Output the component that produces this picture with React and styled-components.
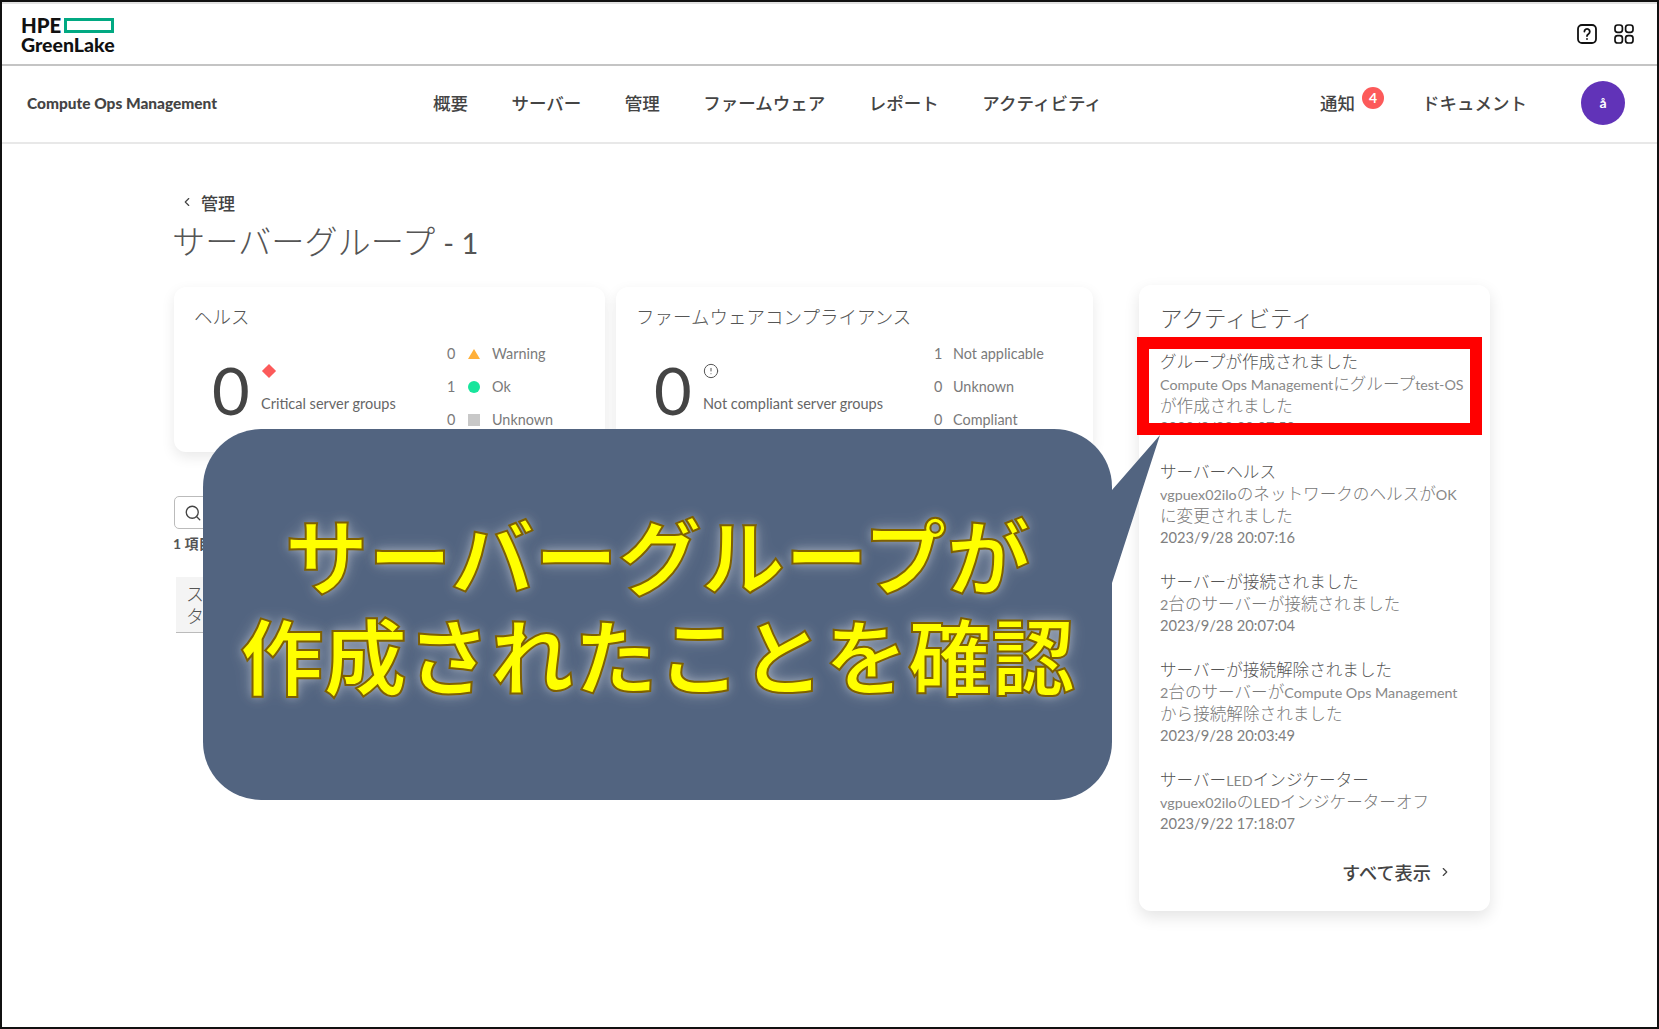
import React from 'react';
import styled, { createGlobalStyle } from 'styled-components';
import { Search, ChevronLeft, ChevronRight, CircleAlert } from 'lucide-react';

const CJK = '"Noto Sans CJK JP"';
const Global = createGlobalStyle`
  html, body { margin: 0; padding: 0; background: #fff; }
  body { font-family: Lato, ${CJK}, sans-serif; color: #444; }
  * { box-sizing: border-box; }
`;

const Frame = styled.div`
  position: relative; width: 1659px; height: 1029px; border: 2px solid #111; overflow: hidden; background: #fff;
`;
const TopBar = styled.header`
  height: 64px; border-top: 2px solid #e2e2e2; border-bottom: 2px solid #c4c4c4;
  display: flex; align-items: flex-start; justify-content: space-between; padding: 13px 23px 0 19px;
`;
const Logo = styled.div`
  display: flex; flex-direction: column; color: #111; font-weight: 900; width: 94px;
`;
const LogoTop = styled.div` display: flex; align-items: center; gap: 3px; height: 16px; font-size: 20.4px; line-height: 16px; `;
const LogoBar = styled.span` width: 50px; height: 15px; border: 3px solid #01a982; `;
const LogoBottom = styled.div` font-size: 19.5px; line-height: 20px; margin-top: 2px; white-space: nowrap; `;
const TopIcons = styled.div` display: flex; gap: 17px; margin-top: 7px; `;

const NavBar = styled.nav`
  height: 78px; border-bottom: 2px solid #e8e8e8; display: flex; align-items: center; padding: 0 0 2px 25px;
  font-family: ${CJK}, sans-serif; color: #444;
`;
const Product = styled.div` width: 406px; font-family: Lato, sans-serif; font-weight: 900; font-size: 15.45px; color: #444; white-space: nowrap; `;
const NavLinks = styled.div` display: flex; gap: 43.5px; width: 887px; `;
const NavLink = styled.a` position: relative; font-size: 17.5px; font-weight: 500; line-height: 24px; white-space: nowrap; margin-left: ${p => p.$offset || 0}px; `;
const Badge = styled.span`
  position: absolute; right: -29px; top: -4px; width: 22px; height: 22px; border-radius: 50%; background: #fc5a5a; color: #fff;
  font: 700 14px/22px Lato, sans-serif; text-align: center;
`;
const Avatar = styled.div`
  width: 44px; height: 44px; border-radius: 50%; background: #6133b8; color: #fff; font: 700 14px/44px Lato, sans-serif; text-align: center; margin-left: 54px;
`;

const Content = styled.main` padding: 46px 0 0 172px; `;
const Crumb = styled.div`
  display: flex; align-items: center; height: 24px; padding-left: 6px; gap: 7px; font-family: ${CJK}, sans-serif; font-size: 17px; font-weight: 500; color: #444;
`;
const PageTitle = styled.h1`
  margin: 4px 0 0 -2px; height: 44px; font: 300 33.2px/44px ${CJK}, sans-serif; color: #555; display: flex; align-items: baseline;
`;
const PageCount = styled.span` font: 400 29px/44px Lato, sans-serif; margin-left: 8px; `;

const Columns = styled.div` display: flex; gap: 46px; margin-top: 23px; align-items: flex-start; `;
const LeftColumn = styled.section` width: 919px; margin-top: 2px; `;
const Cards = styled.div` display: flex; gap: 11px; `;
const Card = styled.article`
  width: ${p => p.$w}px; height: 165px; border-radius: 12px; background: #fff; padding: 18px 0 0 20px;
  box-shadow: 0 5px 14px rgba(0,0,0,.09); overflow: hidden;
`;
const CardTitle = styled.h2` margin: 0; font: 300 18.5px/22px ${CJK}, sans-serif; color: #555; white-space: nowrap; `;
const CardBody = styled.div` display: flex; margin-top: 10px; padding-left: 18px; `;
const Kpi = styled.div` display: flex; width: ${p => p.$w}px; padding-top: 21px; `;
const BigNumber = styled.div` width: 49px; font: 400 65px/64px Lato, sans-serif; color: #444; `;
const KpiSide = styled.div` display: flex; flex-direction: column; align-items: flex-start; gap: 15px; padding-top: 5px; `;
const Diamond = styled.span` width: 10px; height: 10px; margin: 3px 0 3px 3px; background: #fc5a5a; transform: rotate(45deg); `;
const KpiLabel = styled.div` font-size: 14.5px; line-height: 20px; color: #666; white-space: nowrap; `;
const Legend = styled.div` display: flex; flex-direction: column; `;
const LegendRow = styled.div` display: flex; align-items: center; gap: ${p => p.$gap}px; height: 33px; font-size: 14.4px; color: #7a7a7a; white-space: nowrap; `;
const Count = styled.span` width: 9px; `;

const SearchBox = styled.div`
  width: 300px; height: 33px; margin-top: 44px; border: 1px solid #bbb; border-radius: 5px; display: flex; align-items: center; padding-left: 9px; color: #444;
`;
const ItemCount = styled.div` margin: 4px 0 0 -1px; font: 700 14px/22px Lato, ${CJK}, sans-serif; color: #555; `;
const TableHead = styled.div`
  margin: 22px 0 0 2px; height: 56px; background: #f4f4f4; border-bottom: 1px solid #bbb; padding: 5px 0 0 10px; width: 917px;
`;
const HeadCell = styled.div` width: 60px; font: 300 18px/22px ${CJK}, sans-serif; color: #555; `;

const ActivityCard = styled.aside`
  width: 351px; height: 626px; border-radius: 12px; background: #fff; padding: 21px 0 0 21px; box-shadow: 0 6px 16px rgba(0,0,0,.11);
`;
const ActivityTitle = styled.h2` margin: 0 0 22px; font: 300 22.5px/22px ${CJK}, sans-serif; color: #555; `;
const Feed = styled.div` display: flex; flex-direction: column; gap: 22px; `;
const FeedItem = styled.div` display: flex; flex-direction: column; white-space: nowrap; `;
const FeedTitle = styled.div` height: 22px; font: 300 16.6px/22px ${CJK}, sans-serif; color: #555; `;
const FeedText = styled.div` height: 22px; font: 300 16.6px/22px ${CJK}, sans-serif; color: #777; `;
const FeedDate = styled.div` height: 22px; font: 400 14.7px/22px Lato, sans-serif; color: #808080; `;
const Latin = styled.span` font-family: Lato, sans-serif; font-weight: 400; font-size: 14.3px; line-height: 1; color: #888; `;
const ViewAll = styled.div`
  display: flex; align-items: center; justify-content: flex-end; gap: 7px; margin-top: 27px; padding-right: 38px; height: 22px;
  font: 500 18.2px/22px ${CJK}, sans-serif; color: #444;
`;

const RedFrame = styled.div` position: absolute; left: 1135px; top: 335px; width: 345px; height: 98px; border: 12px solid #f00; `;
const Callout = styled.div`
  position: absolute; left: 201px; top: 427px; width: 909px; height: 371px; border-radius: 58px; background: #526480;
  padding-top: 74px; text-align: center; color: #ff0;
  font: 700 83.5px/100px ${CJK}, sans-serif; white-space: nowrap;
  -webkit-text-stroke: 2px #7f6000;
  text-shadow: 0 0 9px rgba(255,255,255,.3), 0 0 14px rgba(255,255,255,.26), 0 0 20px rgba(255,255,255,.18);
`;
const Tail = styled.svg` position: absolute; left: 1098px; top: 433px; `;

const LATIN = /([A-Za-z0-9\-]+(?: [A-Za-z0-9\-]+)*)/;
const Mixed = ({ text }) => text.split(LATIN).map((part, i) => (i % 2 ? <Latin key={i}>{part}</Latin> : part));

const feed = [
  { title: 'グループが作成されました', lines: ['Compute Ops Managementにグループtest-OS', 'が作成されました'], date: '2023/9/28 20:07:50' },
  { title: 'サーバーヘルス', lines: ['vgpuex02iloのネットワークのヘルスがOK', 'に変更されました'], date: '2023/9/28 20:07:16' },
  { title: 'サーバーが接続されました', lines: ['2台のサーバーが接続されました'], date: '2023/9/28 20:07:04' },
  { title: 'サーバーが接続解除されました', lines: ['2台のサーバーがCompute Ops Management', 'から接続解除されました'], date: '2023/9/28 20:03:49' },
  { title: 'サーバーLEDインジケーター', lines: ['vgpuex02iloのLEDインジケーターオフ'], date: '2023/9/22 17:18:07' },
];

const HelpIcon = () => (
  <svg width="20" height="20" viewBox="0 0 20 20" fill="none" stroke="#111" strokeWidth="1.8" strokeLinecap="round">
    <rect x="1" y="1" width="18" height="18" rx="4" />
    <path d="M7.4 7.6a2.7 2.7 0 1 1 4.1 2.3c-.9.6-1.5 1-1.5 2.2" />
    <path d="M10 15v.1" />
  </svg>
);
const AppsIcon = () => (
  <svg width="20" height="20" viewBox="0 0 20 20" fill="none" stroke="#111" strokeWidth="1.7">
    <rect x="1" y="1" width="7.4" height="7.4" rx="2.6" />
    <rect x="11.6" y="1" width="7.4" height="7.4" rx="2.6" />
    <rect x="1" y="11.6" width="7.4" height="7.4" rx="2.6" />
    <rect x="11.6" y="11.6" width="7.4" height="7.4" rx="2.6" />
  </svg>
);
const Triangle = () => <svg width="12" height="12" viewBox="0 0 12 12"><path d="M6 1L12 11H0z" fill="#ffb03a" /></svg>;
const Dot = () => <svg width="12" height="12" viewBox="0 0 12 12"><circle cx="6" cy="6" r="6" fill="#17e59c" /></svg>;
const Square = () => <svg width="12" height="12" viewBox="0 0 12 12"><rect width="12" height="12" fill="#c8c8c8" /></svg>;

export default function App() {
  return (
    <>
      <Global />
      <Frame>
        <TopBar>
          <Logo>
            <LogoTop>HPE<LogoBar /></LogoTop>
            <LogoBottom>GreenLake</LogoBottom>
          </Logo>
          <TopIcons><HelpIcon /><AppsIcon /></TopIcons>
        </TopBar>
        <NavBar>
          <Product>Compute Ops Management</Product>
          <NavLinks>
            <NavLink>概要</NavLink>
            <NavLink>サーバー</NavLink>
            <NavLink>管理</NavLink>
            <NavLink>ファームウェア</NavLink>
            <NavLink>レポート</NavLink>
            <NavLink>アクティビティ</NavLink>
          </NavLinks>
          <NavLink>通知<Badge>4</Badge></NavLink>
          <NavLink $offset={67}>ドキュメント</NavLink>
          <Avatar>å</Avatar>
        </NavBar>
        <Content>
          <Crumb><ChevronLeft size={14} strokeWidth={2} />管理</Crumb>
          <PageTitle>サーバーグループ<PageCount>- 1</PageCount></PageTitle>
          <Columns>
            <LeftColumn>
              <Cards>
                <Card $w={431}>
                  <CardTitle>ヘルス</CardTitle>
                  <CardBody>
                    <Kpi $w={235}>
                      <BigNumber>0</BigNumber>
                      <KpiSide>
                        <Diamond />
                        <KpiLabel>Critical server groups</KpiLabel>
                      </KpiSide>
                    </Kpi>
                    <Legend>
                      <LegendRow $gap={12}><Count>0</Count><Triangle />Warning</LegendRow>
                      <LegendRow $gap={12}><Count>1</Count><Dot />Ok</LegendRow>
                      <LegendRow $gap={12}><Count>0</Count><Square />Unknown</LegendRow>
                    </Legend>
                  </CardBody>
                </Card>
                <Card $w={477}>
                  <CardTitle>ファームウェアコンプライアンス</CardTitle>
                  <CardBody>
                    <Kpi $w={280}>
                      <BigNumber>0</BigNumber>
                      <KpiSide>
                        <CircleAlert size={16} strokeWidth={1.5} color="#555" />
                        <KpiLabel>Not compliant server groups</KpiLabel>
                      </KpiSide>
                    </Kpi>
                    <Legend>
                      <LegendRow $gap={10}><Count>1</Count>Not applicable</LegendRow>
                      <LegendRow $gap={10}><Count>0</Count>Unknown</LegendRow>
                      <LegendRow $gap={10}><Count>0</Count>Compliant</LegendRow>
                    </Legend>
                  </CardBody>
                </Card>
              </Cards>
              <SearchBox><Search size={18} strokeWidth={1.8} /></SearchBox>
              <ItemCount>1 項目</ItemCount>
              <TableHead><HeadCell>ステータス</HeadCell></TableHead>
            </LeftColumn>
            <ActivityCard>
              <ActivityTitle>アクティビティ</ActivityTitle>
              <Feed>
                {feed.map(item => (
                  <FeedItem key={item.title}>
                    <FeedTitle><Mixed text={item.title} /></FeedTitle>
                    {item.lines.map(line => <FeedText key={line}><Mixed text={line} /></FeedText>)}
                    <FeedDate>{item.date}</FeedDate>
                  </FeedItem>
                ))}
              </Feed>
              <ViewAll>すべて表示<ChevronRight size={14} strokeWidth={2} /></ViewAll>
            </ActivityCard>
          </Columns>
        </Content>
        <RedFrame />
        <Tail width="62" height="150" viewBox="0 0 62 150"><polygon points="60,0 12,55 0,55 0,148 12,148" fill="#526480" /></Tail>
        <Callout>サーバーグループが<br />作成されたことを確認</Callout>
      </Frame>
    </>
  );
}
